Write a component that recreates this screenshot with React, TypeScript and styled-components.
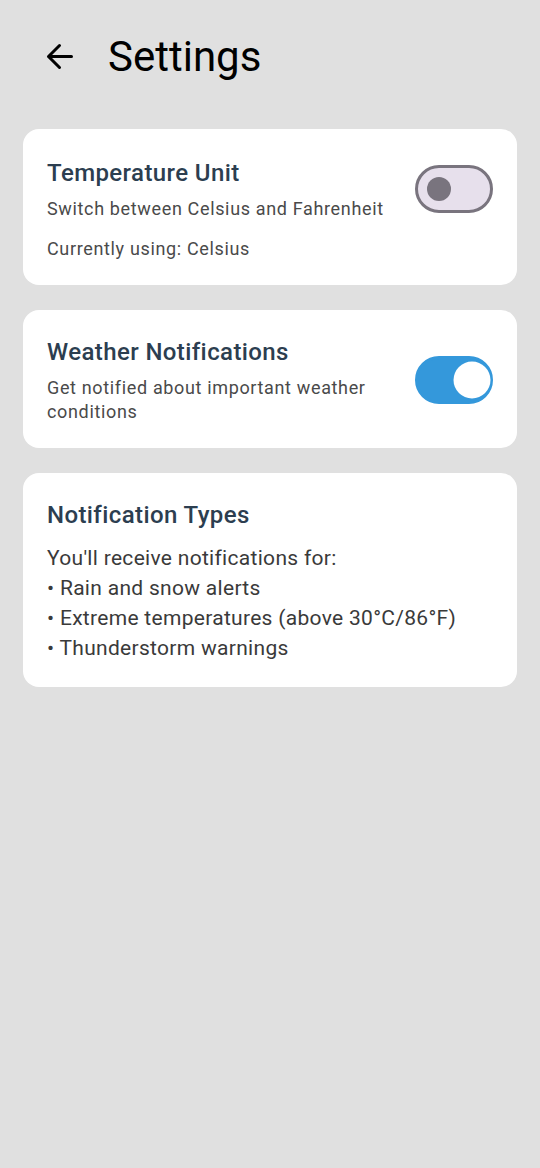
import React, { useState } from "react";
import styled, { createGlobalStyle } from "styled-components";

const GlobalStyle = createGlobalStyle`
  html, body {
    margin: 0;
    padding: 0;
    background: #e0e0e0;
  }
  body {
    font-family: Roboto, "Noto Sans", Arial, sans-serif;
    -webkit-font-smoothing: antialiased;
  }
  * { box-sizing: border-box; }
`;

const Screen = styled.div`
  width: 540px;
  min-height: 1168px;
  background: #e0e0e0;
  display: flex;
  flex-direction: column;
`;

const Header = styled.header`
  height: 112px;
  display: flex;
  align-items: center;
  padding: 1px 0 0 44px;
  gap: 33px;
`;

const BackButton = styled.button`
  width: 31px;
  height: 31px;
  padding: 0;
  border: none;
  background: transparent;
  display: flex;
  align-items: center;
  justify-content: center;
  color: #000;
  cursor: pointer;
`;

const Title = styled.h1`
  margin: 0;
  font-size: 42px;
  font-weight: 400;
  color: #000;
  letter-spacing: 0;
`;

const Content = styled.main`
  display: flex;
  flex-direction: column;
  gap: 25px;
  padding: 17px 23px;
`;

const Card = styled.section`
  background: #fff;
  border-radius: 16px;
  padding: 26px 24px 24px;
  display: flex;
  flex-direction: column;
`;

const Row = styled.div`
  display: flex;
  align-items: center;
  justify-content: space-between;
  min-height: 68px;
  gap: 24px;
`;

const TextBlock = styled.div`
  display: flex;
  flex-direction: column;
  gap: 8px;
  flex: 1;
`;

const CardTitle = styled.h2`
  margin: 0;
  font-size: 24px;
  line-height: 32px;
  font-weight: 500;
  color: #2c3e50;
  letter-spacing: 0.4px;
`;

const Subtitle = styled.p<{ $top?: number }>`
  margin: ${(p) => p.$top ?? 0}px 0 0;
  font-size: 18px;
  line-height: 24px;
  color: #4a4a4a;
  letter-spacing: 0.65px;
`;

const Body = styled.div`
  margin-top: 12px;
  font-size: 21px;
  line-height: 30px;
  color: #3a3a3a;
  letter-spacing: 0.3px;
`;

const SwitchTrack = styled.button<{ $on: boolean }>`
  position: relative;
  flex: none;
  width: 78px;
  height: 48px;
  padding: 0;
  border-radius: 24px;
  border: 3px solid ${(p) => (p.$on ? "#3498db" : "#79747e")};
  background: ${(p) => (p.$on ? "#3498db" : "#e7e0ec")};
  cursor: pointer;
`;

const SwitchThumb = styled.span<{ $on: boolean }>`
  position: absolute;
  top: 50%;
  border-radius: 50%;
  transform: translate(-50%, -50%);
  left: ${(p) => (p.$on ? "54px" : "21px")};
  width: ${(p) => (p.$on ? "37px" : "24px")};
  height: ${(p) => (p.$on ? "37px" : "24px")};
  background: ${(p) => (p.$on ? "#ffffff" : "#79747e")};
`;

function Switch({ on, onToggle }: { on: boolean; onToggle: () => void }) {
  return (
    <SwitchTrack $on={on} onClick={onToggle} role="switch" aria-checked={on}>
      <SwitchThumb $on={on} />
    </SwitchTrack>
  );
}

function BackArrow() {
  return (
    <svg width="31" height="31" viewBox="0 0 31 31" fill="none">
      <path
        d="M27.5 15.5H4.5M15.5 4.5L4.5 15.5L15.5 26.5"
        stroke="#000"
        strokeWidth="3"
        strokeLinecap="round"
        strokeLinejoin="round"
      />
    </svg>
  );
}

export default function App() {
  const [fahrenheit, setFahrenheit] = useState(false);
  const [notify, setNotify] = useState(true);

  return (
    <>
      <GlobalStyle />
      <Screen>
        <Header>
          <BackButton aria-label="Back">
            <BackArrow />
          </BackButton>
          <Title>Settings</Title>
        </Header>
        <Content>
          <Card>
            <Row>
              <TextBlock>
                <CardTitle>Temperature Unit</CardTitle>
                <Subtitle>Switch between Celsius and Fahrenheit</Subtitle>
              </TextBlock>
              <Switch on={fahrenheit} onToggle={() => setFahrenheit(!fahrenheit)} />
            </Row>
            <Subtitle $top={14}>
              Currently using: {fahrenheit ? "Fahrenheit" : "Celsius"}
            </Subtitle>
          </Card>
          <Card>
            <Row>
              <TextBlock>
                <CardTitle>Weather Notifications</CardTitle>
                <Subtitle>Get notified about important weather conditions</Subtitle>
              </TextBlock>
              <Switch on={notify} onToggle={() => setNotify(!notify)} />
            </Row>
          </Card>
          <Card>
            <CardTitle>Notification Types</CardTitle>
            <Body>
              You'll receive notifications for:
              <br />• Rain and snow alerts
              <br />• Extreme temperatures (above 30°C/86°F)
              <br />• Thunderstorm warnings
            </Body>
          </Card>
        </Content>
      </Screen>
    </>
  );
}
